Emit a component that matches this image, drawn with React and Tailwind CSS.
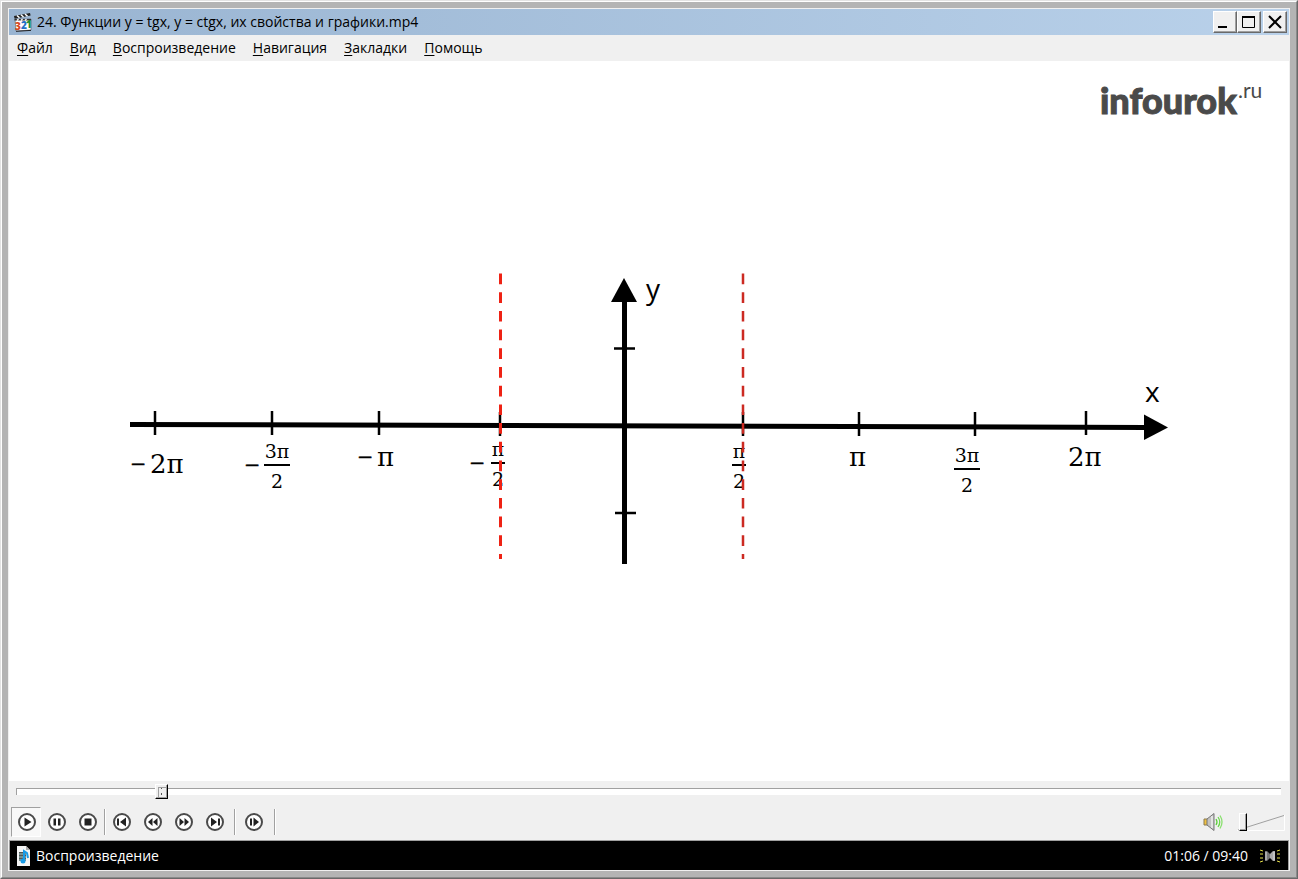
import { useState } from "react";

const menuItems = [
  "Файл",
  "Вид",
  "Воспроизведение",
  "Навигация",
  "Закладки",
  "Помощь",
];

const xTicks = [
  { x: 146, y: 350 },
  { x: 263, y: 350 },
  { x: 370, y: 350 },
  { x: 491, y: 351 },
  { x: 734, y: 351 },
  { x: 850, y: 351 },
  { x: 966, y: 351 },
  { x: 1077, y: 350 },
];

const ClapperIcon = () => (
  <svg width="20" height="20" viewBox="0 0 20 20" aria-hidden="true">
    <path d="M2 7h16v11l-15 1z" fill="#fff" stroke="#556" strokeWidth="0.6" />
    <path d="M1 4 17 1l.6 2.600L1.600 6.800z" fill="#222" />
    <path d="M4 3.500 6.500 5.800M8 2.700l2.500 2.300M12 2l2.500 2.300" stroke="#fff" strokeWidth="1.500" />
    <path d="M1.500 7h16.500v1.500h-16.500z" fill="#333" />
    <path d="M4 8.500l1.500-1.500M8 8.500l1.500-1.500M12 8.500l1.500-1.500" stroke="#fff" strokeWidth="1.300" />
    <path d="M3 19.300 18 18.400" stroke="#222" strokeWidth="1" />
    <g fontFamily="Open Sans, sans-serif" fontWeight="800" fontSize="10">
      <text x="2" y="18" fill="#d9481c">3</text>
      <text x="8" y="17" fill="#2470c8">2</text>
      <text x="13" y="16" fill="#1d8a3a">1</text>
    </g>
  </svg>
);

const WindowButton = ({ label, children }) => (
  <button
    type="button"
    aria-label={label}
    className="flex h-[22px] w-6 items-center justify-center border border-t-white border-l-white border-r-[#696969] border-b-[#696969] bg-[#f0f0f0] shadow-[inset_-1px_-1px_0_#a0a0a0]"
  >
    <svg width="16" height="16" viewBox="0 0 16 16" fill="none" stroke="#000">
      {children}
    </svg>
  </button>
);

const TitleBar = () => (
  <header className="flex h-[26px] items-center bg-linear-to-r from-[#99b4d1] to-[#b9d1ea] pr-[2px] pl-1">
    <ClapperIcon />
    <h1 className="ml-1 flex-1 text-sm text-black">
      24. Функции y = tgx, y = ctgx, их свойства и графики.mp4
    </h1>
    <WindowButton label="Свернуть">
      <path d="M1 13h9" strokeWidth="2" />
    </WindowButton>
    <WindowButton label="Развернуть">
      <path d="M1 3h13" strokeWidth="2" />
      <path d="M1.500 3v10.500h12V3" />
    </WindowButton>
    <span className="w-[2px]" />
    <WindowButton label="Закрыть">
      <path d="m2 2 12 12M14 2 2 14" strokeWidth="2" />
    </WindowButton>
  </header>
);

const MenuBar = () => (
  <nav className="flex h-[26px] items-center gap-[17px] pl-2">
    {menuItems.map((item) => (
      <button key={item} type="button" className="text-sm text-black">
        <span className="underline underline-offset-2">{item[0]}</span>
        {item.slice(1)}
      </button>
    ))}
  </nav>
);

const Fraction = ({ x, y, top, width }) => (
  <g textAnchor="middle" fontSize="19">
    <text x={x} y={y - 7}>{top}</text>
    <path d={`M${x - width / 2} ${y}h${width}`} stroke="#000" strokeWidth="2" />
    <text x={x} y={y + 23}>2</text>
  </g>
);

const VideoFrame = () => (
  <main className="flex flex-1 items-center bg-white">
    <svg
      viewBox="0 0 1280 720"
      className="block w-full"
      role="img"
      aria-label="Координатные оси с асимптотами"
    >
      <g fill="#4a4a4a" fontFamily="Lato, sans-serif" fontWeight="900">
        <text x="1091" y="53" fontSize="36" stroke="#4a4a4a">infourok</text>
        <text x="1229" y="37" fontSize="21" fontWeight="400">.ru</text>
      </g>

      <g stroke="#000">
        <path d="M121 363.500 1136 366.500" strokeWidth="5" />
        <path d="M615.500 238V503" strokeWidth="5" />
        {xTicks.map((tick) => (
          <path key={tick.x} d={`M${tick.x} ${tick.y}v24`} strokeWidth="2.500" />
        ))}
        <path d="M605 287.500h21M606 452h21" strokeWidth="2.500" />
      </g>
      <path d="M615 217 628 241H602z" />
      <path d="M1135 353.500 1159 366.500 1135 379z" />

      <g fontFamily="Open Sans, sans-serif" fontSize="28">
        <text x="637" y="238">y</text>
        <text x="1136" y="341">x</text>
      </g>

      <g fontFamily="DejaVu Serif, serif" fontSize="26">
        <text x="141" y="412">2π</text>
        <Fraction x={268} y={404} top="3π" width={26} />
        <text x="368" y="405">π</text>
        <Fraction x={489} y={402} top="π" width={14} />
        <Fraction x={730} y={404} top="π" width={14} />
        <text x="840" y="405">π</text>
        <Fraction x={958} y={408} top="3π" width={26} />
        <text x="1059" y="405">2π</text>
      </g>
      <g fontFamily="Liberation Serif, serif" fontSize="26" stroke="#000" strokeWidth="0.6">
        <text x="122" y="412">−</text>
        <text x="236" y="413">−</text>
        <text x="349" y="405">−</text>
        <text x="461" y="411">−</text>
      </g>

      <path d="M491.500 212.500V498" stroke="#ee2214" strokeWidth="3" strokeDasharray="10.700 8" />
      <path d="M734 212.500V498" stroke="#cc2a22" strokeWidth="2.500" strokeDasharray="10.700 8" />
    </svg>
  </main>
);

const PlayerButton = ({ label, pressed, children }) => (
  <button
    type="button"
    aria-label={label}
    aria-pressed={pressed}
    className={
      pressed
        ? "flex h-[30px] w-[30px] items-center justify-center border border-t-[#a0a0a0] border-l-[#a0a0a0] border-r-white border-b-white bg-[#f8f8f8] pl-[2px]"
        : "flex h-[30px] w-[31px] items-center justify-center"
    }
  >
    <svg width="20" height="20" viewBox="0 0 20 20" fill="#222" className="shrink-0">
      <circle cx="10" cy="10" r="8" fill="#fff" stroke="#4a4a4a" strokeWidth="2" />
      {children}
    </svg>
  </button>
);

const Separator = () => (
  <span className="h-[26px] w-[2px] border-l border-[#a0a0a0] bg-white" />
);

const SpeakerIcon = () => (
  <svg width="20" height="20" viewBox="0 0 20 20" fill="none" aria-hidden="true">
    <path d="M1 7h4v6H1z" fill="#f0c040" stroke="#8a7a50" />
    <path d="M4 7 11 1.500v17L4 13z" fill="#c4c4c4" stroke="#777" />
    <path d="M9 4v12" stroke="#eee" strokeWidth="1.500" />
    <path d="M13 7q2 3 0 6" stroke="#5ccc3a" strokeWidth="1.300" />
    <path d="M15 5q3.500 5 0 10" stroke="#6bd84a" strokeWidth="1.300" />
    <path d="M17 3.500q4 6.500 0 13" stroke="#8be070" strokeWidth="1.300" />
  </svg>
);

const Controls = () => {
  const [position, setPosition] = useState(110);
  const [volume, setVolume] = useState(0);

  return (
    <section className="h-[59px]">
      <div className="flex h-[21px] items-center pr-2 pl-[7px]">
        <input
          type="range"
          aria-label="Позиция"
          min="0"
          max="1000"
          value={position}
          onChange={(e) => setPosition(Number(e.target.value))}
          className="h-[15px] w-full appearance-none bg-transparent [&::-webkit-slider-runnable-track]:h-[7px] [&::-webkit-slider-runnable-track]:border-t [&::-webkit-slider-runnable-track]:border-l [&::-webkit-slider-runnable-track]:border-[#a0a0a0] [&::-webkit-slider-runnable-track]:bg-white [&::-webkit-slider-thumb]:-mt-[5px] [&::-webkit-slider-thumb]:h-[15px] [&::-webkit-slider-thumb]:w-[13px] [&::-webkit-slider-thumb]:appearance-none [&::-webkit-slider-thumb]:border [&::-webkit-slider-thumb]:border-t-white [&::-webkit-slider-thumb]:border-r-black [&::-webkit-slider-thumb]:border-b-black [&::-webkit-slider-thumb]:border-l-white [&::-webkit-slider-thumb]:bg-[radial-gradient(circle,#555_1px,#f0f0f0_1px)] [&::-webkit-slider-thumb]:bg-size-[11px_6px] [&::-webkit-slider-thumb]:shadow-[inset_-1px_-1px_0_#a0a0a0,inset_2px_2px_0_#f0f0f0,inset_3px_3px_0_#a0a0a0]"
        />
      </div>

      <div className="flex h-[38px] items-center pt-[2px] pr-1 pl-[2px]">
        <PlayerButton label="Воспроизвести" pressed>
          <path d="M7.500 5.500v9l7-4.500z" />
        </PlayerButton>
        <PlayerButton label="Пауза">
          <path d="M6.500 6.500h2.500v7H6.500zM11 6.500h2.500v7h-2.500z" />
        </PlayerButton>
        <PlayerButton label="Стоп">
          <path d="M6.500 6.500h7v7h-7z" />
        </PlayerButton>
        <span className="w-px" />
        <Separator />
        <PlayerButton label="Предыдущий">
          <path d="M5 6.500h2v7H5zM14 5.500v9l-6-4.500z" />
        </PlayerButton>
        <PlayerButton label="Назад">
          <path d="M9.500 6v8L5 10zM14.500 6v8L10 10z" />
        </PlayerButton>
        <PlayerButton label="Вперёд">
          <path d="M5.500 6v8l4.500-4zM10.500 6v8l4.500-4z" />
        </PlayerButton>
        <PlayerButton label="Следующий">
          <path d="M6 5.500v9l6-4.500zM13 6.500h2v7h-2z" />
        </PlayerButton>
        <span className="w-1" />
        <Separator />
        <span className="w-[2px]" />
        <PlayerButton label="Кадр вперёд">
          <path d="M6 6.500h2v7H6zM9.500 5.500v9l5.500-4.500z" />
        </PlayerButton>
        <span className="w-[5px]" />
        <Separator />

        <div className="ml-auto flex items-center gap-[14px]">
          <button type="button" aria-label="Звук">
            <SpeakerIcon />
          </button>
          <div className="grid h-[18px] w-[48px] items-center">
            <svg
              width="48"
              height="18"
              viewBox="0 0 48 18"
              fill="none"
              className="col-start-1 row-start-1"
              aria-hidden="true"
            >
              <path d="M0 17.500h47.500V2" stroke="#fff" />
              <path d="M1 17 47 2.500" stroke="#a0a0a0" />
            </svg>
            <input
              type="range"
              aria-label="Громкость"
              min="0"
              max="100"
              value={volume}
              onChange={(e) => setVolume(Number(e.target.value))}
              className="col-start-1 row-start-1 ml-[2px] h-[18px] w-[46px] appearance-none bg-transparent [&::-webkit-slider-thumb]:h-[18px] [&::-webkit-slider-thumb]:w-2 [&::-webkit-slider-thumb]:appearance-none [&::-webkit-slider-thumb]:border [&::-webkit-slider-thumb]:border-t-white [&::-webkit-slider-thumb]:border-r-black [&::-webkit-slider-thumb]:border-b-black [&::-webkit-slider-thumb]:border-l-white [&::-webkit-slider-thumb]:bg-[#f0f0f0] [&::-webkit-slider-thumb]:shadow-[inset_-1px_-1px_0_#a0a0a0]"
            />
          </div>
        </div>
      </div>
    </section>
  );
};

const StatusBar = () => (
  <footer className="flex h-[30px] items-center border-x border-t border-x-[#a0a0a0] border-t-[#a0a0a0] bg-black pr-2 pl-[7px] text-sm text-white">
    <svg width="14" height="22" viewBox="0 0 14 22" aria-hidden="true">
      <path d="M0 1h9l4 4v16H0z" fill="#f4f4f4" />
      <path d="M9 1v4h4z" fill="#aaa" />
      <path d="M2 7h7v9H2z" fill="#555" />
      <path d="M2 9h7M2 12h7M2 15h7" stroke="#9cc" />
      <path d="M7 15V6l3 2 1 5" fill="none" stroke="#179be8" strokeWidth="2" />
      <circle cx="6" cy="16" r="2.500" fill="#179be8" />
    </svg>
    <span className="ml-[5px] flex-1">Воспроизведение</span>
    <time>01:06 / 09:40</time>
    <svg width="20" height="16" viewBox="0 0 20 16" className="ml-3" aria-hidden="true">
      <path d="M5 3h2l3 3v4l-3 3H5z" fill="#777" />
      <path d="M15 3h-2l-3 3v4l3 3h2z" fill="#aaa" />
      <path d="M6 4v8M14 4v8" stroke="#ddd" />
      <path
        d="m0 2 3 1M0 6h3M0 10h3M0 14l3-1M20 2l-3 1M20 6h-3M20 10h-3M20 14l-3-1"
        stroke="#e6e04a"
      />
    </svg>
  </footer>
);

const App = () => {
  return (
    <div className="flex min-h-screen flex-col border border-t-[#e3e3e3] border-r-[#696969] border-b-[#696969] border-l-[#e3e3e3] bg-[#b4b4b4] font-['Open_Sans','Noto_Sans',sans-serif]">
      <div className="flex flex-1 flex-col border border-t-white border-r-[#8a8a8a] border-b-[#8a8a8a] border-l-white p-[6px]">
        <div className="flex flex-1 flex-col border border-[#f0f0f0] bg-[#f0f0f0]">
          <TitleBar />
          <MenuBar />
          <VideoFrame />
          <Controls />
          <StatusBar />
        </div>
      </div>
    </div>
  );
};

export default App;
